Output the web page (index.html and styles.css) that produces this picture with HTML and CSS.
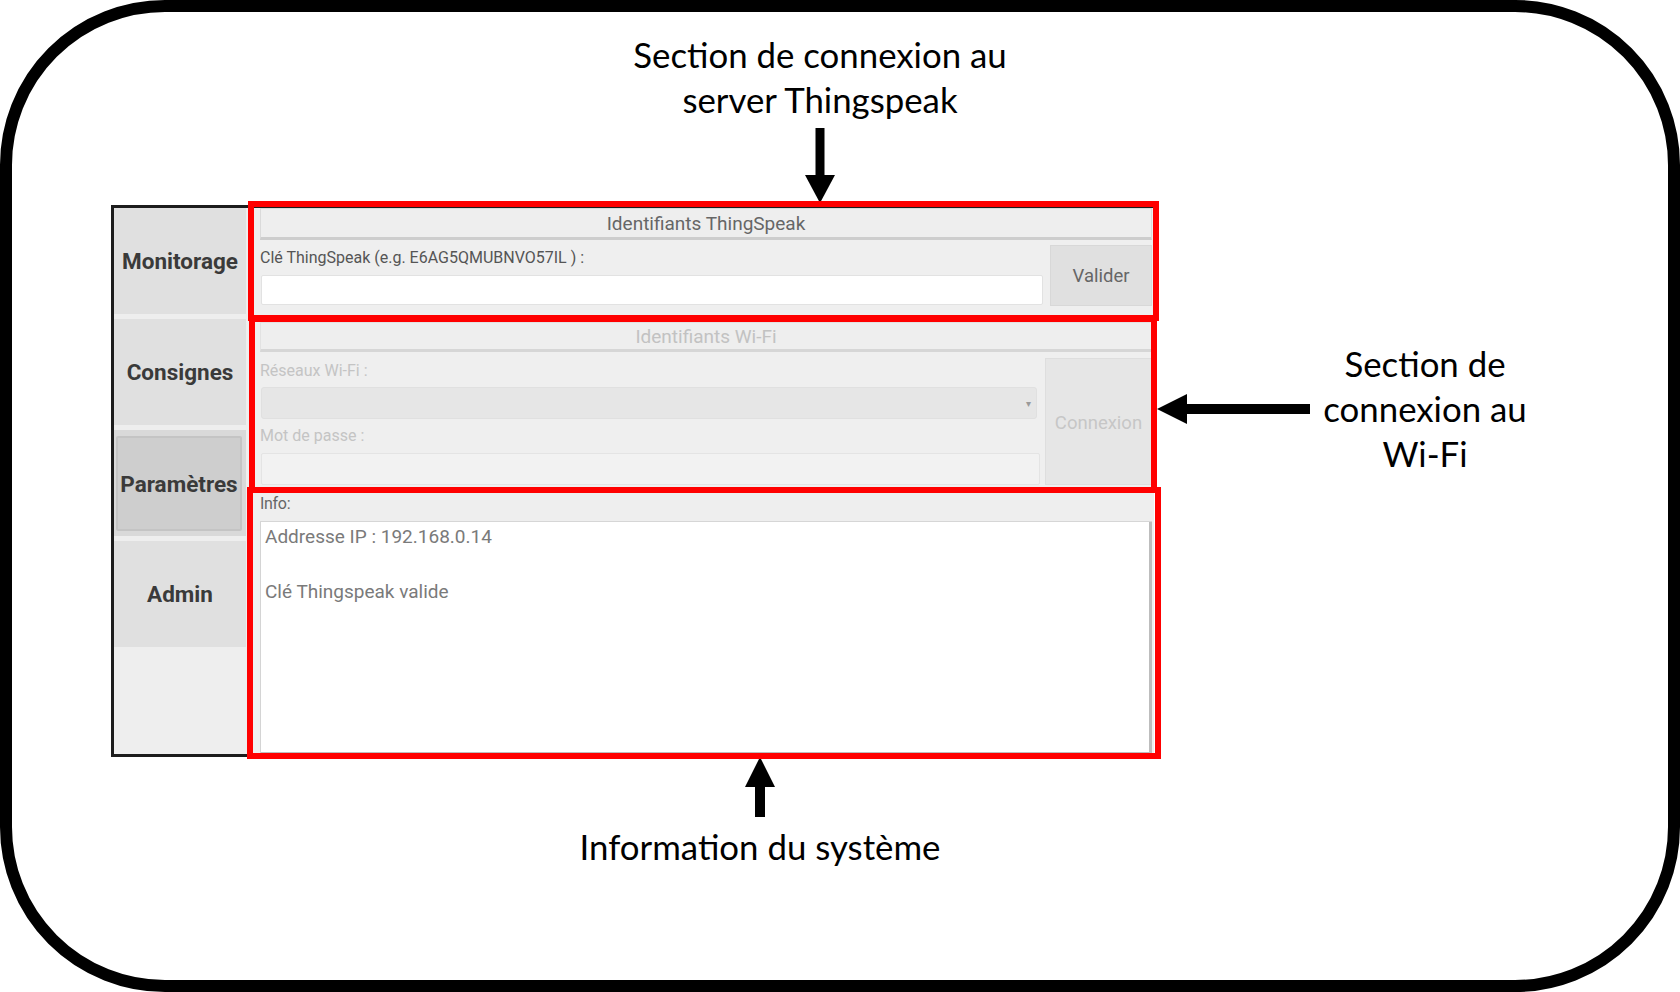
FILE: index.html
```html
<!DOCTYPE html>
<html lang="fr">
<head>
<meta charset="utf-8">
<title>Paramètres</title>
<link rel="stylesheet" href="styles.css">
</head>
<body>
<div class="frame">
  <div class="note note-top">Section de connexion au<br>server Thingspeak</div>
  <svg class="arrow arrow-down" width="30" height="76" viewBox="0 0 30 76"><rect x="10.5" y="0" width="9" height="48"/><polygon points="0,47 30,47 15,75"/></svg>
  <div class="note note-right">Section de<br>connexion au<br>Wi-Fi</div>
  <svg class="arrow arrow-left" width="154" height="30" viewBox="0 0 154 30"><polygon points="0,15 30,0 30,30"/><rect x="29" y="10" width="124" height="10"/></svg>
  <svg class="arrow arrow-up" width="30" height="61" viewBox="0 0 30 61"><polygon points="15,0 0,30 30,30"/><rect x="10" y="29" width="10" height="31"/></svg>
  <div class="note note-bottom">Information du système</div>

  <div class="app">
    <nav class="sidebar">
      <div class="tab">Monitorage</div>
      <div class="tab">Consignes</div>
      <div class="tab tab-active"><span class="tab-inner">Paramètres</span></div>
      <div class="tab">Admin</div>
    </nav>
    <main class="content">
      <div class="sec-head">Identifiants ThingSpeak</div>
      <div class="row row-ts">
        <div class="fields">
          <div class="label">Clé ThingSpeak (e.g. E6AG5QMUBNVO57IL ) :</div>
          <div class="input"></div>
        </div>
        <div class="btn">Valider</div>
      </div>

      <div class="sec-head sec-disabled">Identifiants Wi-Fi</div>
      <div class="row row-wifi">
        <div class="fields">
          <div class="label label-dis">Réseaux Wi-Fi :</div>
          <div class="select"><span class="caret">▾</span></div>
          <div class="label label-dis label-pw">Mot de passe :</div>
          <div class="input input-dis"></div>
        </div>
        <div class="btn btn-dis">Connexion</div>
      </div>

      <div class="info-head">Info:</div>
      <div class="info-box">
        <div class="info-line">Addresse IP : 192.168.0.14</div>
        <div class="info-line">&nbsp;</div>
        <div class="info-line">Clé Thingspeak valide</div>
      </div>
    </main>

    <div class="hl hl-ts"></div>
    <div class="hl hl-wifi"></div>
    <div class="hl hl-info"></div>
  </div>
</div>
</body>
</html>
```

FILE: styles.css
```css
html, body {
  margin: 0;
  padding: 0;
  background: #ffffff;
}

.frame {
  position: relative;
  width: 1680px;
  height: 992px;
  box-sizing: border-box;
  border: 12px solid #000;
  border-radius: 165px;
  background: #fff;
  padding: 193px 0 0 99px;
  overflow: hidden;
}

/* ---------- annotations ---------- */
.note {
  position: absolute;
  font-family: Lato, "Open Sans", sans-serif;
  font-size: 34.8px;
  line-height: 45px;
  color: #000;
  text-align: center;
  white-space: nowrap;
}
.note-top {
  left: 608px;
  top: 20px;
  width: 400px;
}
.note-right {
  left: 1213px;
  top: 329px;
  width: 400px;
}
.note-bottom {
  left: 548px;
  top: 812px;
  width: 400px;
}
.arrow {
  position: absolute;
  fill: #000;
}
.arrow-down { left: 793px; top: 116px; }
.arrow-left { left: 1145px; top: 382px; }
.arrow-up { left: 733px; top: 745px; }

/* ---------- app panel ---------- */
.app {
  position: relative;
  display: flex;
  width: 1043px;
  height: 552px;
  box-sizing: border-box;
  border: 3px solid #1c1c1c;
  border-right: none;
  background: #efefef;
  font-family: Roboto, "Noto Sans", sans-serif;
}

.sidebar {
  width: 133px;
  flex: none;
  display: flex;
  flex-direction: column;
  gap: 5px;
  background: #eeeeee;
}
.tab {
  height: 106px;
  display: flex;
  align-items: center;
  justify-content: center;
  background: #e0e0e0;
  color: #3a3a3a;
  font-weight: 700;
  font-size: 22.5px;
  margin-right: 1px;
  white-space: nowrap;
}
.tab-active {
  background: #d9d9d9;
  padding: 5px 4px 5px 2px;
  box-sizing: border-box;
  padding-top: 6px;
}
.tab-inner {
  flex: 1;
  align-self: stretch;
  display: flex;
  align-items: center;
  justify-content: center;
  background: #cecece;
  border: 2px solid #c4c4c4;
  border-radius: 2px;
  min-width: 0;
}

.content {
  flex: 1;
  display: flex;
  flex-direction: column;
  padding: 0 2px 0 13px;
  min-width: 0;
}

.sec-head {
  height: 32px;
  box-sizing: border-box;
  border: 1px solid #dadada;
  border-bottom: 3px solid #cdcdcd;
  background: #eeeeee;
  color: #666;
  font-size: 19px;
  display: flex;
  align-items: center;
  justify-content: center;
  flex: none;
}
.sec-disabled {
  margin-top: 16px;
  height: 30px;
  color: #c2c2c2;
  border-color: #e2e2e2;
  border-bottom-color: #d6d6d6;
}

.row {
  display: grid;
  column-gap: 7px;
  flex: none;
}
.row-ts {
  margin-top: 5px;
  grid-template-columns: 1fr 102px;
  height: 61px;
}
.row-wifi {
  margin-top: 6px;
  grid-template-columns: 1fr 107px;
  column-gap: 5px;
  height: 127px;
}
.fields {
  display: flex;
  flex-direction: column;
}
.label {
  height: 30px;
  font-size: 16px;
  color: #555;
  display: flex;
  align-items: center;
  padding-bottom: 6px;
  box-sizing: border-box;
  white-space: nowrap;
}
.label-dis {
  color: #c4c4c4;
  height: 29px;
  padding-bottom: 4px;
}
.label-pw {
  height: 34px;
  padding-bottom: 2px;
}
.input {
  height: 30px;
  background: #ffffff;
  border: 1px solid #e2e2e2;
  border-radius: 2px;
  box-sizing: border-box;
  margin-left: 1px;
}
.input-dis {
  height: 32px;
  background: #f2f2f2;
  border-color: #e4e4e4;
}
.select {
  height: 32px;
  background: #e6e6e6;
  border: 1px solid #e0e0e0;
  border-radius: 3px;
  box-sizing: border-box;
  position: relative;
  display: flex;
  align-items: center;
  justify-content: flex-end;
  padding-right: 5px;
  margin-right: 3px;
  margin-left: 1px;
}
.caret {
  font-size: 10px;
  color: #9a9a9a;
}
.btn {
  background: #e0e0e0;
  border: 1px solid #d8d8d8;
  box-sizing: border-box;
  display: flex;
  align-items: center;
  justify-content: center;
  color: #666;
  font-size: 18.5px;
}
.btn-dis {
  background: #e6e6e6;
  color: #c6c6c6;
  border-color: #dedede;
  padding-top: 3px;
}

.info-head {
  margin-top: 4px;
  height: 33px;
  box-sizing: border-box;
  border-bottom: 1px solid #d6d6d6;
  background: #eeeeee;
  font-size: 16px;
  color: #666;
  letter-spacing: -0.3px;
  display: flex;
  align-items: center;
  padding-bottom: 3px;
  flex: none;
}
.info-box {
  flex: 1;
  background: #fff;
  border-left: 1px solid #d4d4d4;
  border-right: 3px solid #bdbdbd;
  border-bottom: 2px solid #bdbdbd;
  padding: 1px 4px;
  color: #7a7a7a;
  font-size: 19px;
  line-height: 27.5px;
}

/* red highlight frames laid over the app */
.hl {
  position: absolute;
  border: 6px solid #ff0000;
  box-sizing: border-box;
  pointer-events: none;
}
.hl-ts   { left: 134px; top: -7px;  width: 911px; height: 120px; }
.hl-wifi { left: 135px; top: 108px; width: 908px; height: 177px; }
.hl-info { left: 133px; top: 279px; width: 914px; height: 272px; }
```
